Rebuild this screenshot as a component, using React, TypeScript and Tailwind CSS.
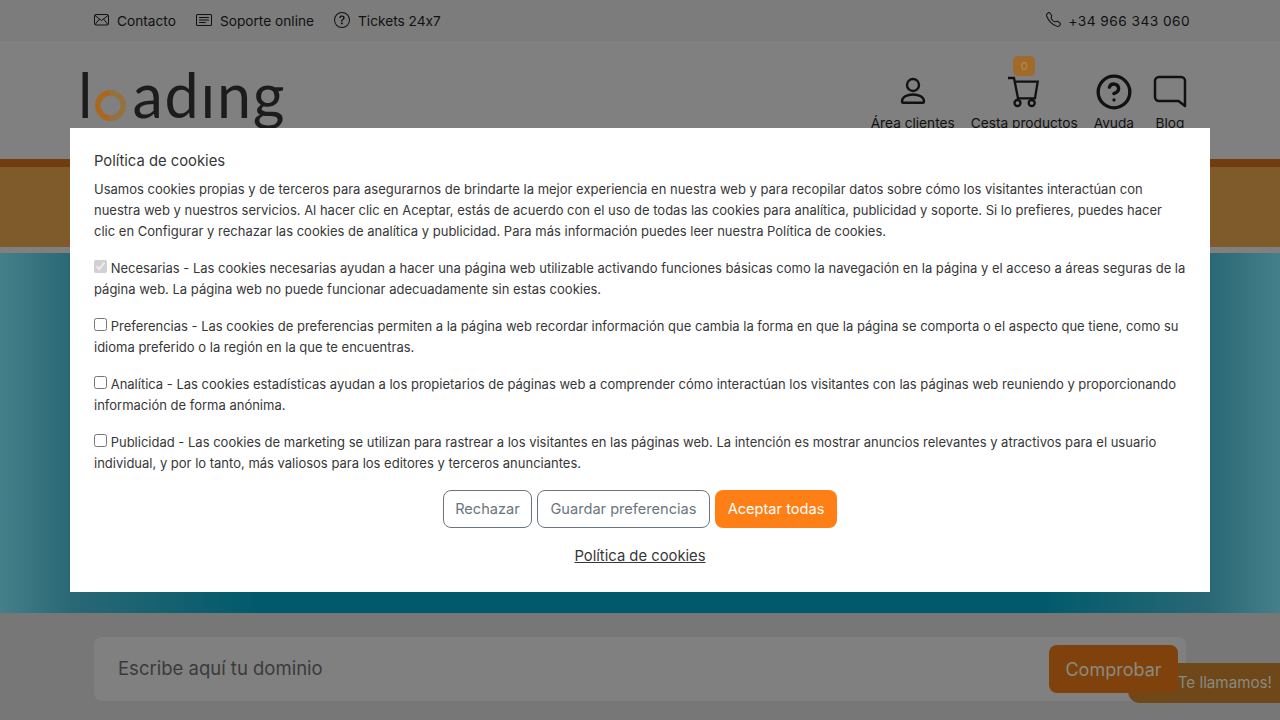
import React from 'react';
import { BsCardText, BsQuestionCircle, BsTelephone } from 'react-icons/bs';
import { CircleHelp } from 'lucide-react';

const EnvelopeIcon = () => (
    <svg width="15" height="12" viewBox="0 0 15 12" fill="none" stroke="currentColor" strokeWidth="1">
        <rect x="0.5" y="0.5" width="14" height="10.500" rx="1.500" />
        <path d="M1 1.500 7.500 6.500 14 1.500M1 10.500l4.500-5.500M14 10.500 9.500 5" />
    </svg>
);

const PersonIcon = () => (
    <svg width="26" height="34" viewBox="0 0 26 34" fill="none" stroke="currentColor" strokeWidth="2.4">
        <circle cx="13" cy="10" r="6" />
        <path d="M2 26.500c0-4.500 5-7 11-7s11 2.500 11 7c0 .8-.5 1.300-1.200 1.300H3.200C2.500 27.800 2 27.300 2 26.500z" />
    </svg>
);

const CartIcon = () => (
    <svg width="34" height="34" viewBox="0 0 34 34" fill="none" stroke="currentColor" strokeWidth="2.3">
        <path d="M1 3h6l4 20.300h17L30.700 6.700H7.600" />
        <circle cx="10.500" cy="28" r="3" />
        <circle cx="24.700" cy="28" r="3" />
    </svg>
);

const ChatIcon = () => (
    <svg width="34" height="34" viewBox="0 0 34 34" fill="none" stroke="currentColor" strokeWidth="2.5" strokeLinejoin="round">
        <path d="M6 2h22a4 4 0 0 1 4 4v25l-6.500-5H6a4 4 0 0 1-4-4V6a4 4 0 0 1 4-4z" />
    </svg>
);

const topLinks = [
    { label: 'Contacto', icon: <EnvelopeIcon /> },
    { label: 'Soporte online', icon: <BsCardText size={16} /> },
    { label: 'Tickets 24x7', icon: <BsQuestionCircle size={16} /> },
];

const cookieOptions = [
    {
        checked: true,
        text: 'Necesarias - Las cookies necesarias ayudan a hacer una página web utilizable activando funciones básicas como la navegación en la página y el acceso a áreas seguras de la página web. La página web no puede funcionar adecuadamente sin estas cookies.',
    },
    {
        checked: false,
        text: 'Preferencias - Las cookies de preferencias permiten a la página web recordar información que cambia la forma en que la página se comporta o el aspecto que tiene, como su idioma preferido o la región en la que te encuentras.',
    },
    {
        checked: false,
        text: 'Analítica - Las cookies estadísticas ayudan a los propietarios de páginas web a comprender cómo interactúan los visitantes con las páginas web reuniendo y proporcionando información de forma anónima.',
    },
    {
        checked: false,
        text: 'Publicidad - Las cookies de marketing se utilizan para rastrear a los visitantes en las páginas web. La intención es mostrar anuncios relevantes y atractivos para el usuario individual, y por lo tanto, más valiosos para los editores y terceros anunciantes.',
    },
];

export default function App() {
    return (
        <div className="relative h-[720px] w-[1280px] overflow-hidden bg-[#808080] font-['Inter',sans-serif] text-[#111] [font-feature-settings:'calt'_0]">
            <div className="flex h-[41px] items-center justify-between bg-[#7c7c7c] pl-[94px] pr-[90px] pt-[1px] text-[13.7px]">
                <div className="flex items-center gap-5">
                    {topLinks.map((link) => (
                        <div key={link.label} className="flex items-center gap-2">
                            <span className="-mt-[2px]">{link.icon}</span>
                            <span>{link.label}</span>
                        </div>
                    ))}
                </div>
                <div className="flex items-center gap-2">
                    <span className="-mt-[2px]"><BsTelephone size={15} /></span>
                    <span className="tracking-[0.45px]">+34 966 343 060</span>
                </div>
            </div>

            <div className="flex h-[118px] justify-between pl-[78px] pr-[94px]">
                <div className="flex items-start pt-[17px] font-['Lato',sans-serif] text-[61px] leading-[74px] text-[#1c1c1c]">
                    <span>l</span>
                    <svg width="31" height="31" viewBox="0 0 31 31" fill="none" strokeWidth="5.500" className="ml-[3px] mr-[6px] mt-[32px]">
                        <path d="M15.500 2.800a12.700 12.700 0 0 0 0 25.400" stroke="#a9671f" />
                        <path d="M15.500 2.800a12.700 12.700 0 0 1 0 25.400" stroke="#94713f" />
                    </svg>
                    <span className="tracking-[1.800px]">adıng</span>
                </div>
                <nav className="flex gap-4 pt-[34px] text-[13.7px]">
                    <div className="flex flex-col items-center">
                        <div className="h-[34px]"><PersonIcon /></div>
                        <span className="mt-1 leading-5">Área clientes</span>
                    </div>
                    <div className="relative flex flex-col items-center">
                        <span className="absolute -top-[19px] left-1/2 flex h-5 w-[22px] -translate-x-1/2 items-center justify-center rounded-[5px] bg-[#9f6a2a] text-[11px] text-[#b98b54]">0</span>
                        <div className="h-[34px]"><CartIcon /></div>
                        <span className="mt-1 leading-5">Cesta productos</span>
                    </div>
                    <div className="flex flex-col items-center">
                        <div className="-mt-[2px] h-[36px]"><CircleHelp size={38} strokeWidth={2.1} /></div>
                        <span className="mt-1 leading-5">Ayuda</span>
                    </div>
                    <div className="ml-1 flex w-8 flex-col items-center">
                        <div className="h-[34px]"><ChatIcon /></div>
                        <span className="mt-1 leading-5">Blog</span>
                    </div>
                </nav>
            </div>

            <div className="h-2 bg-[#713c10]" />
            <div className="h-20 bg-[#7f5a2b]" />
            <div className="h-[6px] bg-[#808080]" />
            <div className="h-[360px] bg-[linear-gradient(90deg,#43808a_0px,#2a6875_70px,#005a6b_260px,#005a6b_1040px,#2a6875_1210px,#43808a_1280px)]" />

            <div className="h-[107px] bg-[#777777] px-[94px] pt-6">
                <div className="flex h-16 items-center justify-between rounded-lg bg-[#808080] pl-6 pr-2">
                    <input
                        placeholder="Escribe aquí tu dominio"
                        className="flex-1 bg-transparent text-[18.5px] text-[#3a3a3a] outline-none placeholder:text-[#3a3a3a]"
                    />
                    <button className="relative z-10 h-12 w-[129px] rounded-lg bg-[#80420c] text-[18px] text-[#8a8a80]">Comprobar</button>
                </div>
            </div>

            <div className="absolute right-0 top-[663px] flex h-10 w-[152px] items-center justify-end rounded-l-xl bg-[#6e4819] pr-2 text-[15.2px] text-[#8a8a80]">
                Te llamamos!
            </div>

            <div className="absolute left-[70px] top-[128px] w-[1140px] bg-white px-6 pt-6 text-[13px] leading-[21px] text-[#373737]">
                <h5 className="mb-[9px] text-[14.8px] leading-[18px]">Política de cookies</h5>
                <p className="mb-4">
                    Usamos cookies propias y de terceros para asegurarnos de brindarte la mejor experiencia en nuestra web y para recopilar datos sobre cómo los visitantes interactúan con nuestra web y nuestros servicios. Al hacer clic en Aceptar, estás de acuerdo con el uso de todas las cookies para analítica, publicidad y soporte. Si lo prefieres, puedes hacer clic en Configurar y rechazar las cookies de analítica y publicidad. Para más información puedes leer nuestra Política de cookies.
                </p>
                {cookieOptions.map((option) => (
                    <p key={option.text} className="mb-4">
                        <input type="checkbox" disabled={option.checked} defaultChecked={option.checked} className="align-[0px]" /> {option.text}
                    </p>
                ))}
                <div className="flex justify-center gap-[5px] text-[14.6px]">
                    <button className="h-[38px] w-[89px] rounded-lg border border-[#6c757d] text-[#6c757d]">Rechazar</button>
                    <button className="h-[38px] w-[173px] rounded-lg border border-[#6c757d] text-[#6c757d]">Guardar preferencias</button>
                    <button className="h-[38px] w-[122px] rounded-lg bg-[#ff7f17] text-white">Aceptar todas</button>
                </div>
                <div className="mt-4 pb-6 text-center text-[14.8px] leading-6">
                    <a className="underline">Política de cookies</a>
                </div>
            </div>
        </div>
    );
}
